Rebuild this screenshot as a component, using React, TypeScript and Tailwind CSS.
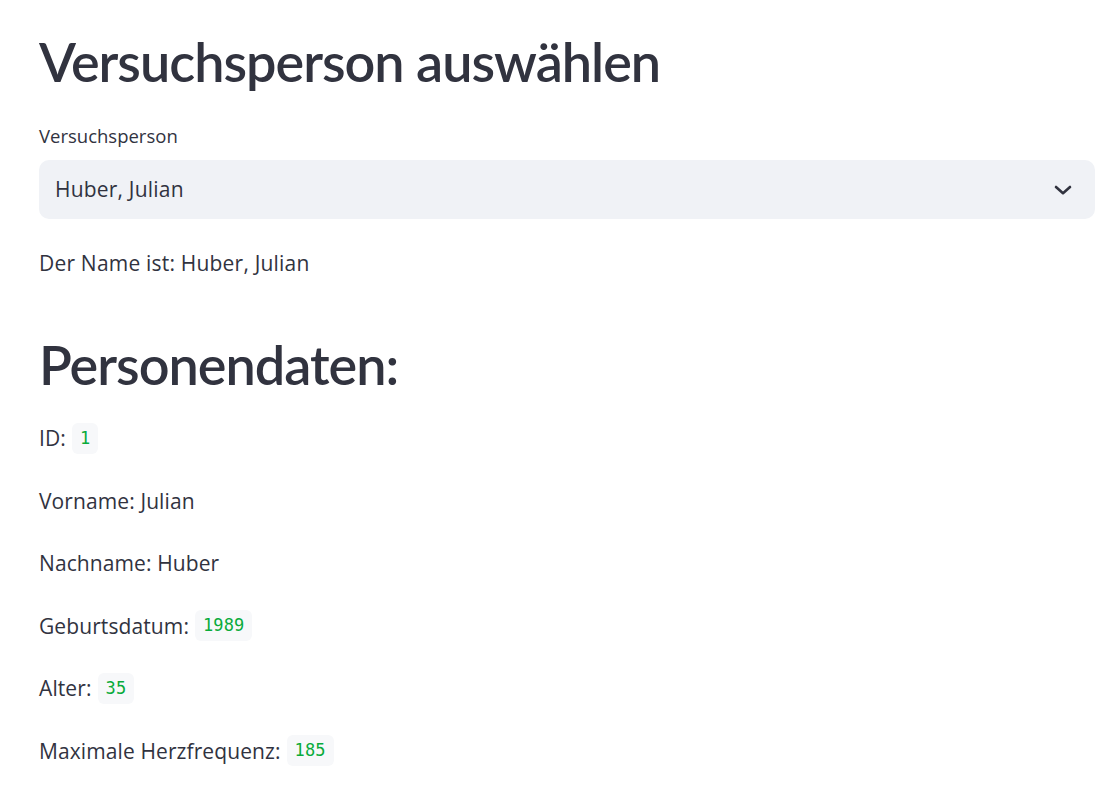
import React from "react";

const Code = ({ children }: { children: React.ReactNode }) => (
  <span
    className="inline-flex items-center h-[31px] px-[8px] rounded-[6px] bg-[#f7f8fa] text-[#09ab3b] text-[17px] leading-none ml-[6px]"
    style={{ fontFamily: '"DejaVu Sans Mono", "Liberation Mono", monospace' }}
  >
    {children}
  </span>
);

const Row = ({ label, code, text }: { label: string; code?: string; text?: string }) => (
  <div className="h-[32px] flex items-center text-[21px] leading-[32px] tracking-[0.1px]">
    <span>
      {label}
      {text ? " " + text : ""}
    </span>
    {code && <Code>{code}</Code>}
  </div>
);

const heading = { fontFamily: 'Lato, "Noto Sans", sans-serif' };

export default function App() {
  return (
    <div
      className="min-h-[790px] w-full bg-white text-[#31333f] pl-[39px] pr-[22px] pt-[29px]"
      style={{ fontFamily: '"Open Sans", "Noto Sans", sans-serif' }}
    >
      <h1 className="text-[54px] leading-[66px] font-semibold tracking-[-1px]" style={heading}>
        Versuchsperson auswählen
      </h1>
      <div className="mt-[30px] text-[18.5px] leading-[22px]">Versuchsperson</div>
      <div className="mt-[13px] h-[59px] rounded-[10px] bg-[#f0f2f6] flex items-center justify-between pl-[16px] pr-[23px]">
        <span className="text-[21px] tracking-[0.2px]">Huber, Julian</span>
        <svg width="18" height="10" viewBox="0 0 18 10" fill="none" stroke="#31333f" strokeWidth="2.6" strokeLinecap="round" strokeLinejoin="round">
          <path d="M2 2L9 8.2L16 2" />
        </svg>
      </div>
      <p className="mt-[28px] text-[21px] leading-[32px] tracking-[0.2px]">Der Name ist: Huber, Julian</p>
      <h1 className="mt-[53px] text-[54px] leading-[66px] font-semibold tracking-[-1px]" style={heading}>
        Personendaten:
      </h1>
      <div className="mt-[24px] flex flex-col gap-[30.6px]">
        <Row label="ID:" code="1" />
        <Row label="Vorname:" text="Julian" />
        <Row label="Nachname:" text="Huber" />
        <Row label="Geburtsdatum:" code="1989" />
        <Row label="Alter:" code="35" />
        <Row label="Maximale Herzfrequenz:" code="185" />
      </div>
    </div>
  );
}
